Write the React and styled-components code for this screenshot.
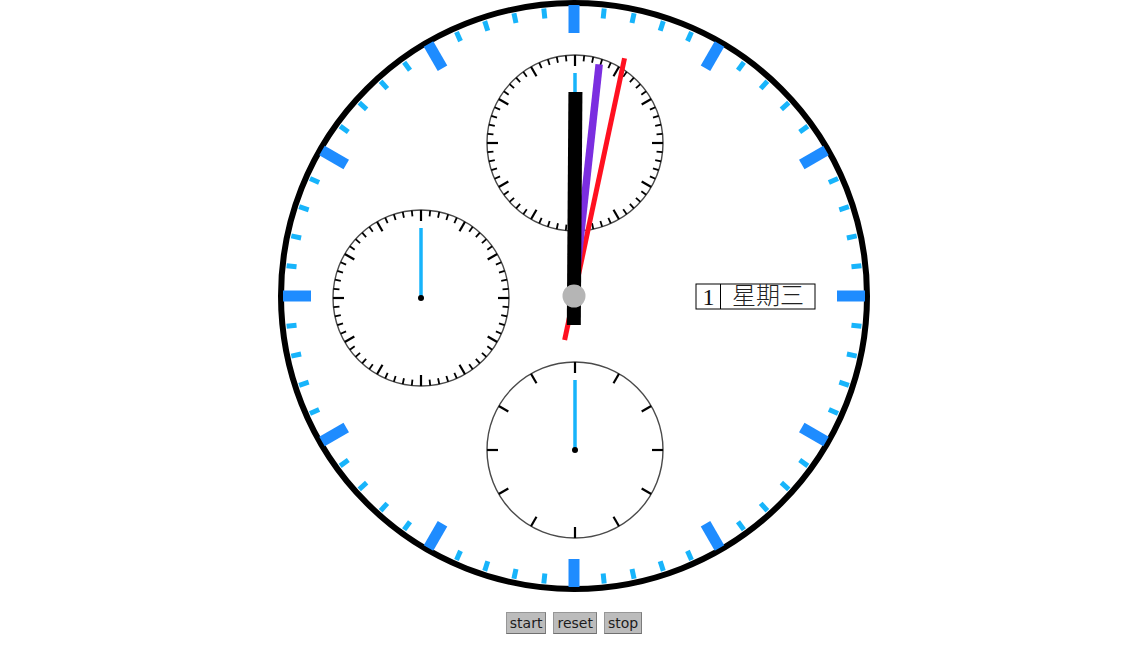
import React from "react";
import styled, { createGlobalStyle } from "styled-components";

const GlobalStyle = createGlobalStyle`
  html, body {
    margin: 0;
    padding: 0;
    background: #ffffff;
  }
`;

const Page = styled.div`
  display: flex;
  flex-direction: column;
  align-items: center;
  padding-left: 6px;
  width: 1142px;
  box-sizing: border-box;
`;

const Face = styled.svg`
  display: block;
  width: 600px;
  height: 600px;
`;

const Controls = styled.div`
  display: flex;
  gap: 7px;
  margin-top: 12px;
`;

const Button = styled.button`
  height: 22px;
  padding: 0 3px;
  margin: 0;
  font-family: "DejaVu Sans", sans-serif;
  font-size: 14px;
  line-height: 20px;
  color: #1c1c1c;
  background: #bcbcbc;
  border: 1px solid #979797;
  border-bottom-color: #707070;
  border-right-color: #7c7c7c;
  border-radius: 0;
  cursor: pointer;
`;

const CX = 300;
const CY = 296;
const BIG = "#1e8cff";
const SMALL = "#17b4fb";

const polar = (cx, cy, r, deg) => {
  const a = (deg * Math.PI) / 180;
  return [cx + r * Math.sin(a), cy - r * Math.cos(a)];
};

const Tick = ({ cx, cy, r1, r2, deg, color, width }) => {
  const [x1, y1] = polar(cx, cy, r1, deg);
  const [x2, y2] = polar(cx, cy, r2, deg);
  return <line x1={x1} y1={y1} x2={x2} y2={y2} stroke={color} strokeWidth={width} />;
};

const SubDial = ({ cx, cy, marks }) => {
  const ticks = [];
  const step = 360 / marks;
  for (let i = 0; i < marks; i++) {
    const major = marks === 12 || i % 5 === 0;
    ticks.push(
      <Tick
        key={i}
        cx={cx}
        cy={cy}
        r1={major ? 77 : 82}
        r2={88}
        deg={i * step}
        color="#000"
        width={major ? 2.2 : 1.8}
      />
    );
  }
  return (
    <g>
      <circle cx={cx} cy={cy} r={88} fill="#fff" stroke="#4a4a4a" strokeWidth={1.4} />
      {ticks}
      <line x1={cx} y1={cy} x2={cx} y2={cy - 70} stroke={SMALL} strokeWidth={3.5} />
      <circle cx={cx} cy={cy} r={3} fill="#000" />
    </g>
  );
};

const Hand = ({ deg, back, front, width, color }) => (
  <line
    x1={CX}
    y1={CY + back}
    x2={CX}
    y2={CY - front}
    stroke={color}
    strokeWidth={width}
    transform={`rotate(${deg} ${CX} ${CY})`}
  />
);

const DateWindow = ({ day, weekday }) => (
  <g fontFamily={'"Liberation Serif", "Noto Sans CJK SC", serif'} fontSize={24} fill="#111">
    <rect x={422} y={284} width={119} height={25} fill="#fff" stroke="#000" strokeWidth={1} />
    <line x1={446.5} y1={284} x2={446.5} y2={309} stroke="#000" strokeWidth={1} />
    <text x={434.5} y={305} textAnchor="middle">{day}</text>
    <text x={494} y={304} textAnchor="middle" fontWeight={300} fill="#222">{weekday}</text>
  </g>
);

const App = () => {
  const rim = [];
  for (let i = 0; i < 60; i++) {
    const major = i % 5 === 0;
    rim.push(
      <Tick
        key={i}
        cx={CX}
        cy={CY}
        r1={major ? 263 : 279}
        r2={major ? 291 : 289}
        deg={i * 6}
        color={major ? BIG : SMALL}
        width={major ? 11 : 5}
      />
    );
  }

  return (
    <>
      <GlobalStyle />
      <Page>
        <Face viewBox="0 0 600 600">
          <circle cx={CX} cy={CY} r={293} fill="#fff" stroke="#000" strokeWidth={6} />
          {rim}
          <SubDial cx={301} cy={143} marks={60} />
          <SubDial cx={147} cy={298} marks={60} />
          <SubDial cx={301} cy={450} marks={12} />
          <DateWindow day="1" weekday="星期三" />
          <Hand deg={12} back={45} front={243} width={5} color="#ff1020" />
          <Hand deg={6.2} back={0} front={233} width={7.5} color="#7b2ee0" />
          <Hand deg={0.4} back={29} front={204} width={14} color="#000" />
          <circle cx={CX} cy={CY} r={11.5} fill="#b5b5b5" />
        </Face>
        <Controls>
          <Button>start</Button>
          <Button>reset</Button>
          <Button>stop</Button>
        </Controls>
      </Page>
    </>
  );
};

export default App;
